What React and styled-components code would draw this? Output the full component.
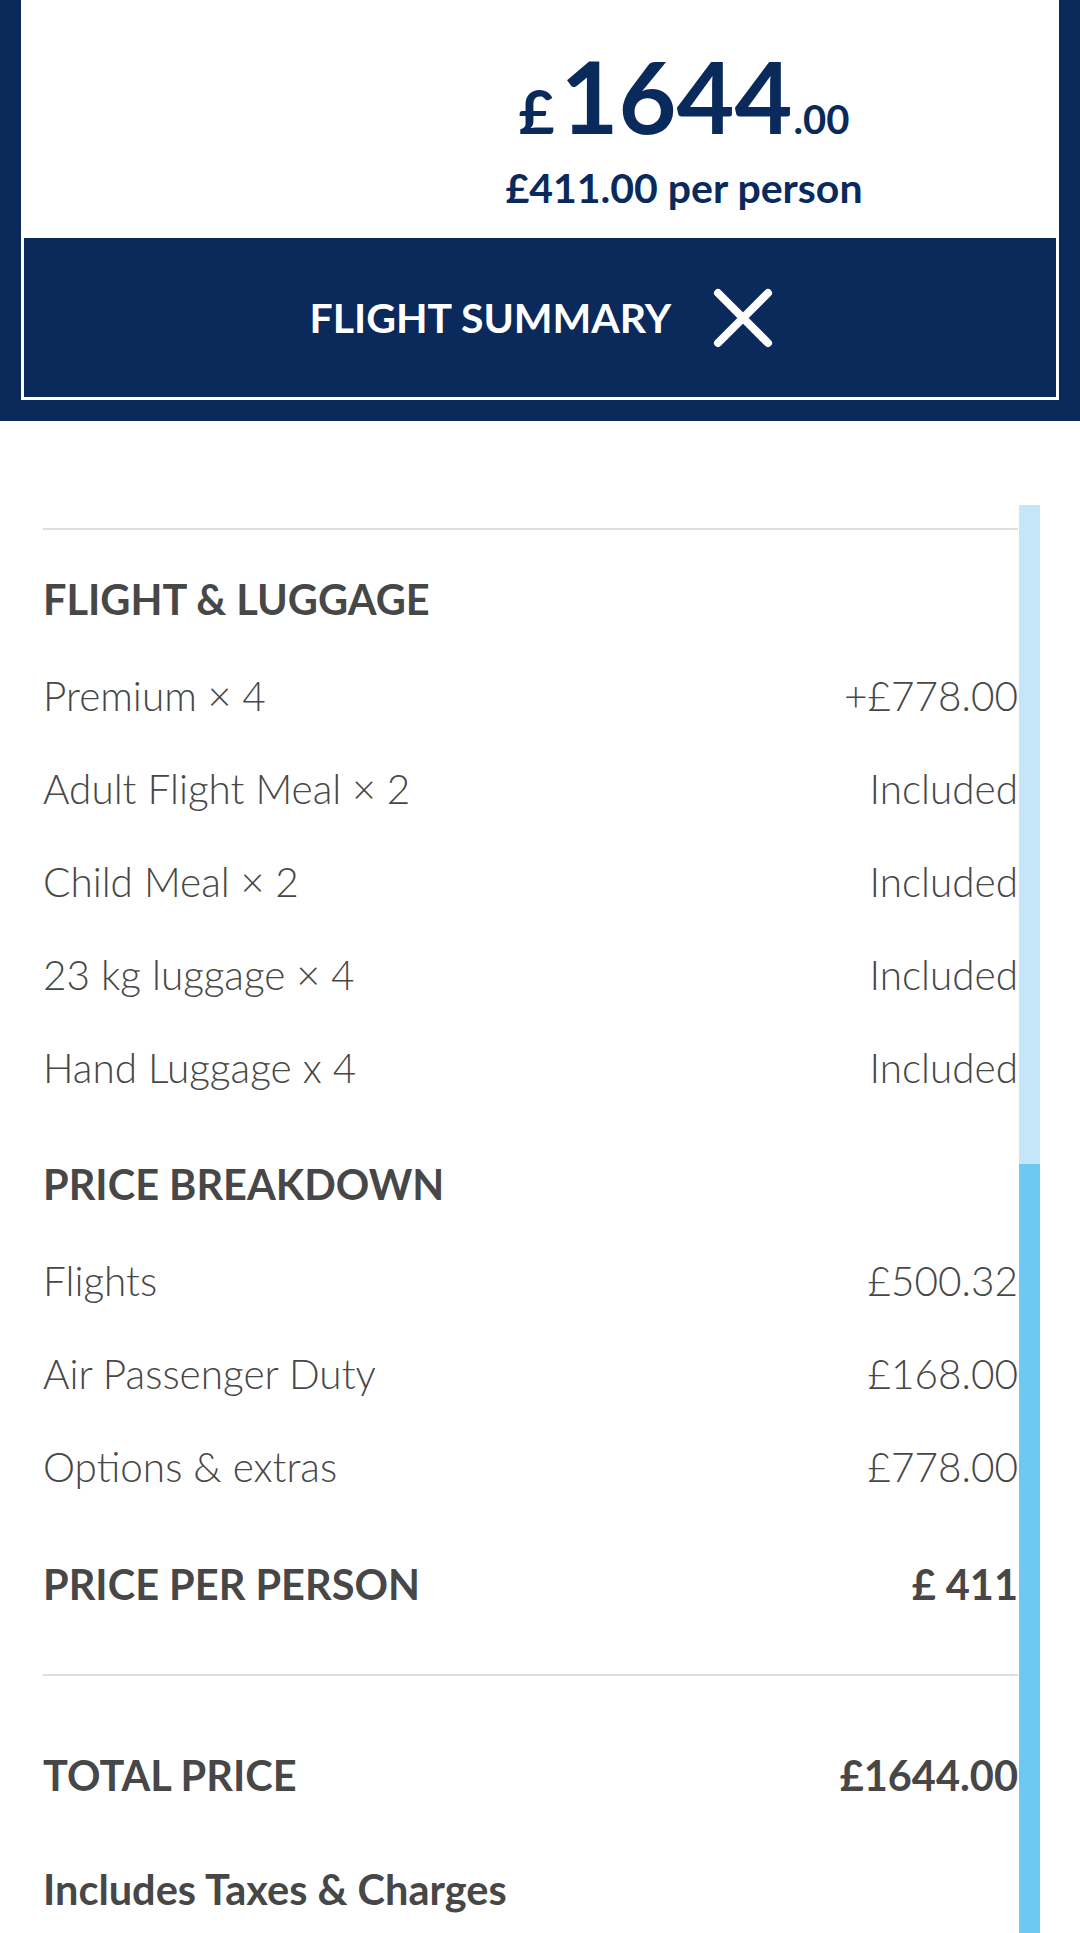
import styled, { createGlobalStyle } from 'styled-components';

const navy = '#0a2a5c';
const ink = '#474747';

const GlobalStyle = createGlobalStyle`
    html, body {
        margin: 0;
        padding: 0;
        background: #fff;
    }
    body {
        font-family: Lato, "Open Sans", "Liberation Sans", sans-serif;
        color: ${ink};
    }
`

const Page = styled.div`
    width: 1080px;
    height: 1933px;
    overflow: hidden;
    display: flex;
    flex-direction: column;
`

const Header = styled.header`
    flex: none;
    background: ${navy};
    height: 421px;
    box-sizing: border-box;
    padding: 0 21px 21px;
    display: flex;
`

const Card = styled.div`
    flex: 1;
    background: #fff;
    display: flex;
    flex-direction: column;
`

const PriceBlock = styled.div`
    flex: 1;
    padding: 45px 0 0 288px;
    display: flex;
    flex-direction: column;
    align-items: center;
    color: ${navy};
    font-weight: 700;
`

const BigPrice = styled.div`
    display: flex;
    align-items: baseline;
    line-height: 1;
    .currency {
        font-size: 62px;
        margin-right: 6px;
    }
    .amount {
        font-size: 100px;
    }
    .pence {
        font-size: 40px;
        margin-left: 1px;
    }
`

const PerPerson = styled.div`
    margin-top: 22px;
    font-size: 41px;
    line-height: 1;
`

const SummaryButton = styled.button`
    flex: none;
    height: 159px;
    margin: 0 3px 3px;
    border: none;
    background: ${navy};
    color: #fff;
    display: flex;
    align-items: center;
    justify-content: center;
    gap: 41px;
    font-family: inherit;
    font-size: 41px;
    font-weight: 700;
    line-height: 1;
    padding: 0 0 0 4px;
    svg {
        display: block;
    }
`

const Body = styled.main`
    flex: 1;
    display: flex;
    padding-left: 43px;
`

const Summary = styled.div`
    flex: 1;
    display: flex;
    flex-direction: column;
`

const Divider = styled.hr`
    flex: none;
    margin: ${p => p.$top}px 0 0;
    border: none;
    border-top: 2px solid #dfdfdf;
    height: 0;
`

const Heading = styled.h3`
    flex: none;
    margin: ${p => p.$top || 0}px 0 0;
    height: 100px;
    display: flex;
    align-items: center;
    justify-content: space-between;
    font-size: 41.5px;
    font-weight: 700;
    line-height: 1;
    color: ${ink};
`

const Line = styled.div`
    flex: none;
    height: 93px;
    display: flex;
    align-items: center;
    justify-content: space-between;
    font-size: 40.5px;
    font-weight: 300;
    line-height: 1;
`

const Track = styled.div`
    width: 21px;
    margin: 84px 40px 0 1px;
    background: #c4e6f8;
    display: flex;
    flex-direction: column;
    &::before {
        content: '';
        height: 659px;
        flex: none;
    }
`

const Thumb = styled.div`
    flex: 1;
    background: #6ec9f2;
`

const luggage = [
    ['Premium × 4', '+£778.00'],
    ['Adult Flight Meal × 2', 'Included'],
    ['Child Meal × 2', 'Included'],
    ['23 kg luggage × 4', 'Included'],
    ['Hand Luggage x 4', 'Included'],
];

const breakdown = [
    ['Flights', '£500.32'],
    ['Air Passenger Duty', '£168.00'],
    ['Options & extras', '£778.00'],
];

function CloseIcon() {
    return (
        <svg width="62" height="62" viewBox="0 0 62 62">
            <path d="M6 6 L56 56 M56 6 L6 56" stroke="#fff" strokeWidth="8" strokeLinecap="round" fill="none" />
        </svg>
    )
}

function App() {
    return (
        <Page>
            <GlobalStyle />
            <Header>
                <Card>
                    <PriceBlock>
                        <BigPrice>
                            <span className="currency">£</span>
                            <span className="amount">1644</span>
                            <span className="pence">.00</span>
                        </BigPrice>
                        <PerPerson>£411.00 per person</PerPerson>
                    </PriceBlock>
                    <SummaryButton>
                        <span>FLIGHT SUMMARY</span>
                        <CloseIcon />
                    </SummaryButton>
                </Card>
            </Header>
            <Body>
                <Summary>
                    <Divider $top={107} />
                    <Heading $top={20}>FLIGHT &amp; LUGGAGE</Heading>
                    {luggage.map(([label, value]) => (
                        <Line key={label}>
                            <span>{label}</span>
                            <span>{value}</span>
                        </Line>
                    ))}
                    <Heading $top={20}>PRICE BREAKDOWN</Heading>
                    {breakdown.map(([label, value]) => (
                        <Line key={label}>
                            <span>{label}</span>
                            <span>{value}</span>
                        </Line>
                    ))}
                    <Heading $top={21}>
                        <span>PRICE PER PERSON</span>
                        <span>£ 411</span>
                    </Heading>
                    <Divider $top={39} />
                    <Heading $top={50}>
                        <span>TOTAL PRICE</span>
                        <span>£1644.00</span>
                    </Heading>
                    <Heading $top={14}>Includes Taxes &amp; Charges</Heading>
                </Summary>
                <Track>
                    <Thumb />
                </Track>
            </Body>
        </Page>
    )
}

export default App;
